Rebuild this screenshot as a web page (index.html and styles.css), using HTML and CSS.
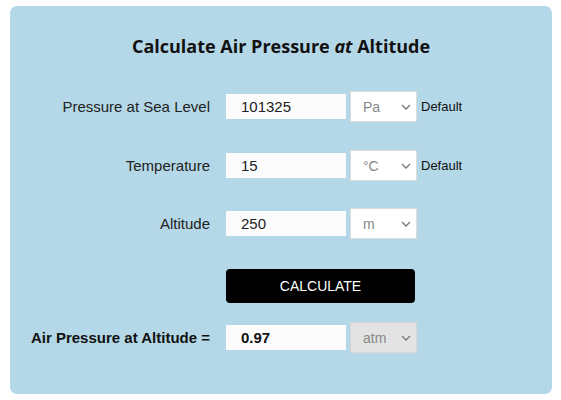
FILE: index.html
```html
<!DOCTYPE html>
<html>
<head>
<meta charset="utf-8">
<link rel="stylesheet" href="styles.css">
</head>
<body>
<div class="card">
  <h1 class="title">Calculate Air Pressure <em>at</em> Altitude</h1>
  <div class="row r1">
    <label class="lbl">Pressure at Sea Level</label>
    <input class="inp" type="text" value="101325">
    <div class="sel"><span>Pa</span><svg class="chev" width="10" height="6" viewBox="0 0 10 6"><path d="M1 1 L5 5 L9 1" fill="none" stroke="#777" stroke-width="1.3"/></svg></div>
    <span class="def">Default</span>
  </div>
  <div class="row r2">
    <label class="lbl">Temperature</label>
    <input class="inp" type="text" value="15">
    <div class="sel"><span>°C</span><svg class="chev" width="10" height="6" viewBox="0 0 10 6"><path d="M1 1 L5 5 L9 1" fill="none" stroke="#777" stroke-width="1.3"/></svg></div>
    <span class="def">Default</span>
  </div>
  <div class="row r3">
    <label class="lbl">Altitude</label>
    <input class="inp" type="text" value="250">
    <div class="sel"><span>m</span><svg class="chev" width="10" height="6" viewBox="0 0 10 6"><path d="M1 1 L5 5 L9 1" fill="none" stroke="#777" stroke-width="1.3"/></svg></div>
  </div>
  <div class="row rb">
    <span class="lbl"></span>
    <button class="btn">CALCULATE</button>
  </div>
  <div class="row rr">
    <label class="lbl bold">Air Pressure at Altitude =</label>
    <input class="inp bold" type="text" value="0.97">
    <div class="sel dis"><span>atm</span><svg class="chev" width="10" height="6" viewBox="0 0 10 6"><path d="M1 1 L5 5 L9 1" fill="none" stroke="#777" stroke-width="1.3"/></svg></div>
  </div>
</div>
</body>
</html>
```
FILE: styles.css
```css
* { box-sizing: border-box; }
html, body { margin: 0; padding: 0; background: #fff; }
body { padding: 6px 9px 0 10px; font-family: "Liberation Sans", Arial, sans-serif; }
.card {
  width: 542px;
  height: 388px;
  background: #b4d8e7;
  border-radius: 7px;
  padding-top: 29px;
}
.title {
  margin: 0 0 34px 0;
  text-align: center;
  font-family: "Open Sans", sans-serif;
  font-weight: 700;
  font-size: 18px;
  line-height: 22px;
  color: #111;
}
.title em { font-style: italic; }
.row {
  display: flex;
  align-items: center;
  height: 31px;
}
.r2 { margin-top: 28px; }
.r3 { margin-top: 27px; }
.rb { margin-top: 30px; height: 34px; }
.rr { margin-top: 19px; }
.lbl {
  width: 200px;
  text-align: right;
  font-size: 15px;
  color: #222;
  margin-right: 16px;
  flex: none;
}
.bold { font-weight: 700; color: #111; }
.inp {
  width: 120px;
  height: 25px;
  border: none;
  background: #fcfcfc;
  padding: 0 0 0 15px;
  font-family: "Liberation Sans", Arial, sans-serif;
  font-size: 15px;
  color: #222;
  outline: none;
  margin: 0 4px 0 0;
  flex: none;
}
.inp.bold { color: #111; }
.sel {
  position: relative;
  width: 67px;
  height: 31px;
  border: 1px solid #dcdcdc;
  background: #fff;
  display: flex;
  align-items: center;
  padding-left: 12px;
  font-size: 14px;
  color: #888;
  flex: none;
}
.sel.dis { background: #e3e3e3; border-color: #d6d6d6; color: #888; }
.chev { position: absolute; right: 5px; top: 12px; }
.def {
  margin-left: 4px;
  font-size: 13px;
  color: #111;
}
.btn {
  width: 189px;
  height: 34px;
  background: #000;
  color: #fff;
  border: none;
  border-radius: 4px;
  font-family: "Liberation Sans", Arial, sans-serif;
  font-size: 14px;
  padding: 0;
}
```
